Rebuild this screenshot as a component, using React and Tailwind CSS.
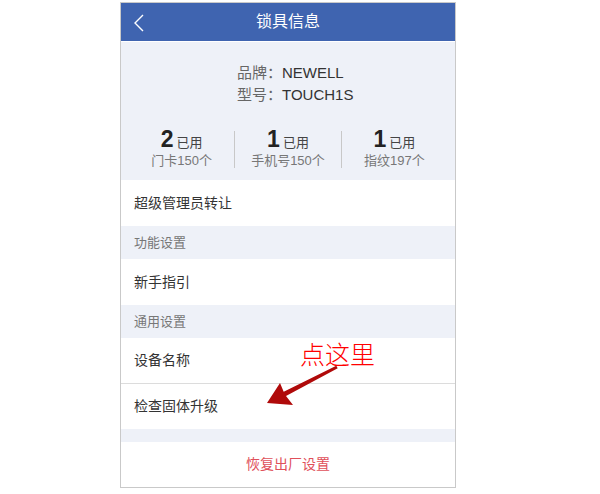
import React from "react";

const font = { fontFamily: '"Liberation Sans", "Noto Sans CJK SC", sans-serif' };

const stats = [
  { num: "2", label: "门卡150个" },
  { num: "1", label: "手机号150个" },
  { num: "1", label: "指纹197个" },
];

const Row = ({ children, border = false, h = "h-[46px]" }) => (
  <div
    className={`${h} flex items-center pl-[13px] bg-white text-[14px] text-[#333] ${
      border ? "border-b border-[#dcdcdc]" : ""
    }`}
  >
    {children}
  </div>
);

const Section = ({ children }) => (
  <div className="h-[33px] flex items-center pl-[13px] bg-[#eef1f8] text-[13px] text-[#777]">
    {children}
  </div>
);

const App = () => {
  return (
    <div className="w-[600px] h-[494px] bg-white pt-[2px] pl-[120px]" style={font}>
      <div className="relative w-[336px] border border-[#c9c9c9] bg-white">
        {/* header */}
        <div className="h-[38px] bg-[#3f64b0] flex items-center relative">
          <div className="absolute left-[12px] top-[11px]">
            <svg width="12" height="18" viewBox="0 0 12 18">
              <polyline points="10,1 2,9 10,17" fill="none" stroke="#fff" strokeWidth="1.4" />
            </svg>
          </div>
          <div className="flex-1 text-center text-white text-[16px]">锁具信息</div>
        </div>
        <div className="h-px bg-white" />

        {/* lock info */}
        <div className="h-[138px] bg-[#eef1f8] pt-[20px]">
          <div className="pl-[116px] text-[15px] leading-[22px]">
            <div>
              <span className="text-[#666]">品牌：</span>
              <span className="text-[#333]">NEWELL</span>
            </div>
            <div>
              <span className="text-[#666]">型号：</span>
              <span className="text-[#333]">TOUCH1S</span>
            </div>
          </div>
          <div className="mt-[21px] px-[8px] grid grid-cols-[1fr_1px_1fr_1px_1fr] items-center">
            {stats.map((s, i) => (
              <React.Fragment key={i}>
                {i > 0 && <div className="w-px h-[37px] bg-[#c8c8c8]" />}
                <div className="flex flex-col items-center">
                  <div className="h-[24px] flex items-end leading-none">
                    <span className="text-[23px] font-bold text-[#222]">{s.num}</span>
                    <span className="text-[13px] text-[#444] ml-[3px] mb-[2px]">已用</span>
                  </div>
                  <div className="h-[20px] flex items-center text-[13px] text-[#777]">{s.label}</div>
                </div>
              </React.Fragment>
            ))}
          </div>
        </div>

        <Row>超级管理员转让</Row>
        <Section>功能设置</Section>
        <Row>新手指引</Row>
        <Section>通用设置</Section>
        <Row border>设备名称</Row>
        <Row h="h-[45px]">检查固体升级</Row>
        <div className="h-[13px] bg-[#eef1f8]" />
        <div className="h-[45px] flex items-center justify-center text-[14px] text-[#e0505a]">
          恢复出厂设置
        </div>

        {/* annotation */}
        <div className="absolute left-[179px] top-[340px] text-[25px] leading-none text-[#ff0000] font-light">
          点这里
        </div>
        <svg className="absolute left-[141px] top-[359px]" width="80" height="48" viewBox="0 0 80 48">
          <polygon
            points="74.3,3.7 21.7,29.7 18,21 5,41 31,43 24,34.1 75.7,6.3"
            fill="#b00a0a"
          />
        </svg>
      </div>
    </div>
  );
};

export default App;
